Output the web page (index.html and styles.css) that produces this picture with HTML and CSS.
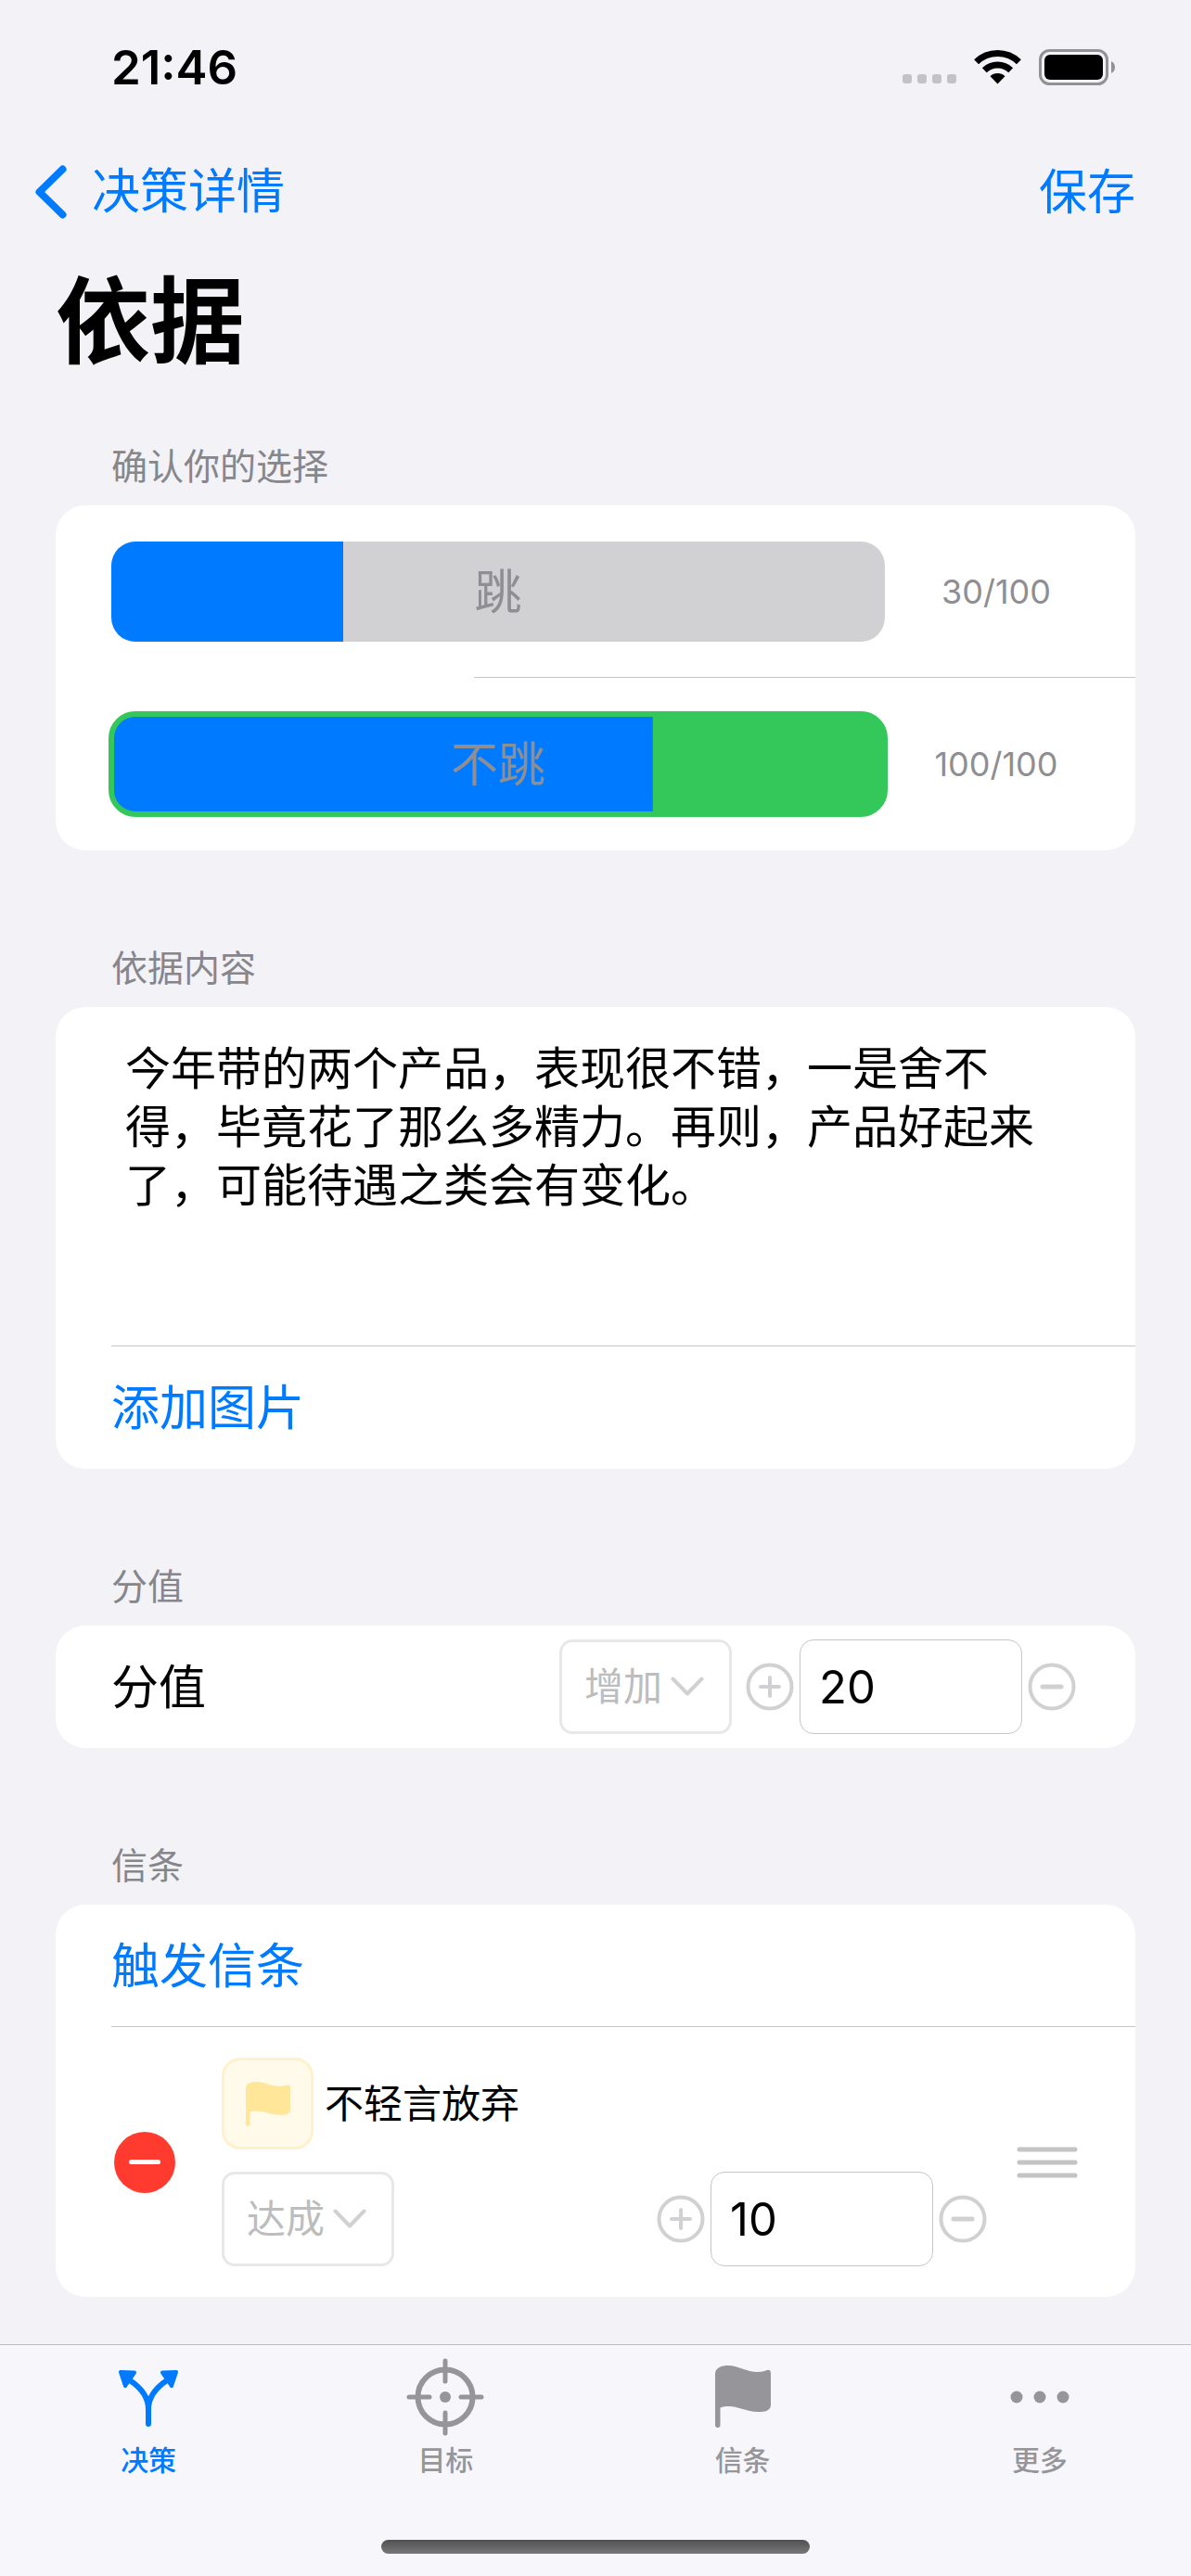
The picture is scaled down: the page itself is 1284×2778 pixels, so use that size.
FILE: index.html
```html
<!DOCTYPE html>
<html lang="zh-CN">
<head>
    <meta charset="UTF-8">
    <meta name="viewport" content="width=device-width, initial-scale=1">
    <title>依据</title>
    <link rel="stylesheet" href="styles.css">
</head>
<body>
    <!-- shared icons -->
    <svg class="sprite" width="0" height="0" aria-hidden="true">
        <symbol id="flag" viewBox="0 0 60 67" preserveAspectRatio="none">
            <path d="M0 9Q0 5 3 3C7 0 11 0 14 0C24 0 34 7 46 7C50 7 53 6 56 5Q60 4 60 9V43Q60 46 57 48C54 50 50 50 46 50C34 50 25 44 15 44C12 44 8 44 5.500 45.500V64Q5.500 67 2.700 67Q0 67 0 64Z"/>
        </symbol>
        <symbol id="down" viewBox="0 0 36 22">
            <path d="M2.500 2.500L18 18.500L33.500 2.500" fill="none" stroke="currentColor" stroke-width="4" stroke-linecap="round" stroke-linejoin="round"/>
        </symbol>
        <symbol id="plus" viewBox="0 0 52 52">
            <circle cx="26" cy="26" r="23.500" fill="none" stroke="currentColor" stroke-width="4"/>
            <path d="M16 26H36M26 16V36" stroke="currentColor" stroke-width="4" stroke-linecap="round"/>
        </symbol>
        <symbol id="minus" viewBox="0 0 52 52">
            <circle cx="26" cy="26" r="23.500" fill="none" stroke="currentColor" stroke-width="4"/>
            <path d="M16 26H36" stroke="currentColor" stroke-width="5" stroke-linecap="round"/>
        </symbol>
    </svg>

    <div class="status-bar">
        <span class="time">21:46</span>
        <div class="status-icons">
            <svg width="58" height="12" viewBox="0 0 58 12" fill="#c3c3c7">
                <rect width="10" height="10" rx="3"/>
                <rect x="16" width="10" height="10" rx="3"/>
                <rect x="32" width="10" height="10" rx="3"/>
                <rect x="48" width="10" height="10" rx="3"/>
            </svg>
            <svg class="wifi" width="51" height="38" viewBox="0 0 51 38" fill="none" stroke="#000" stroke-width="7">
                <path d="M2.600 12.800A33 33 0 0 1 48.400 12.800"/>
                <path d="M11.300 21.800A20.500 20.500 0 0 1 39.700 21.800"/>
                <path d="M17.500 28.200A11.500 11.500 0 0 1 33.500 28.200L25.500 36.500Z" fill="#000" stroke="none"/>
            </svg>
            <svg width="82" height="39" viewBox="0 0 82 39">
                <rect x="1.500" y="1.500" width="72" height="36" rx="10" fill="none" stroke="#929296" stroke-width="3"/>
                <rect x="6" y="6" width="63" height="27" rx="6"/>
                <path d="M78 13Q82 15 82 19.500Q82 24 78 26Z" fill="#929296"/>
            </svg>
        </div>
    </div>

    <nav class="nav-bar">
        <a href="#" class="back">
            <svg width="34" height="58" viewBox="0 0 34 58">
                <path d="M29.500 4.500L4.500 29L29.500 53.500" fill="none" stroke="currentColor" stroke-width="8" stroke-linecap="round" stroke-linejoin="round"/>
            </svg>
            决策详情
        </a>
        <button class="link" type="button">保存</button>
    </nav>

    <main>
        <h1>依据</h1>

        <section>
            <h2>确认你的选择</h2>
            <div class="card">
                <div class="row choice-row">
                    <button class="choice" type="button" style="background-size: 30% 100%">跳</button>
                    <span class="score">30/100</span>
                </div>
                <hr class="short">
                <div class="row choice-row">
                    <button class="choice selected" type="button" style="background-size: 70% 100%">不跳</button>
                    <span class="score">100/100</span>
                </div>
            </div>
        </section>

        <section>
            <h2><label for="content">依据内容</label></h2>
            <div class="card">
                <div class="row">
                    <textarea id="content">今年带的两个产品，表现很不错，一是舍不得，毕竟花了那么多精力。再则，产品好起来了，可能待遇之类会有变化。</textarea>
                </div>
                <hr>
                <div class="row">
                    <button class="link" type="button">添加图片</button>
                </div>
            </div>
        </section>

        <section>
            <h2>分值</h2>
            <div class="card">
                <div class="row">
                    <label class="row-label" for="score">分值</label>
                    <div class="select">
                        <select aria-label="分值类型">
                            <option>增加</option>
                            <option>减少</option>
                        </select>
                        <svg width="36" height="22"><use href="#down"/></svg>
                    </div>
                    <div class="stepper">
                        <button type="button" aria-label="加"><svg width="52" height="52"><use href="#plus"/></svg></button>
                        <input type="text" id="score" inputmode="numeric" value="20">
                        <button type="button" aria-label="减"><svg width="52" height="52"><use href="#minus"/></svg></button>
                    </div>
                </div>
            </div>
        </section>

        <section>
            <h2>信条</h2>
            <div class="card">
                <div class="row">
                    <button class="link" type="button">触发信条</button>
                </div>
                <hr>
                <div class="row creed-row">
                    <button class="delete" type="button" aria-label="删除"></button>
                    <div class="creed">
                        <div class="creed-title">
                            <span class="creed-icon">
                                <svg width="48" height="48" fill="#ffe699"><use href="#flag"/></svg>
                            </span>
                            <label for="creed-score">不轻言放弃</label>
                        </div>
                        <div class="creed-controls">
                            <div class="select">
                                <select aria-label="信条状态">
                                    <option>达成</option>
                                    <option>违背</option>
                                </select>
                                <svg width="36" height="22"><use href="#down"/></svg>
                            </div>
                            <div class="stepper">
                                <button type="button" aria-label="加"><svg width="52" height="52"><use href="#plus"/></svg></button>
                                <input type="text" id="creed-score" inputmode="numeric" value="10">
                                <button type="button" aria-label="减"><svg width="52" height="52"><use href="#minus"/></svg></button>
                            </div>
                        </div>
                    </div>
                    <svg class="grip" width="66" height="34" viewBox="0 0 66 34" stroke="#c4c4c6" stroke-width="5" stroke-linecap="round">
                        <path d="M3 3H63M3 17H63M3 31H63"/>
                    </svg>
                </div>
            </div>
        </section>
    </main>

    <footer class="tab-bar">
        <div class="tabs">
            <a href="#" class="tab active">
                <svg width="84" height="84" viewBox="0 0 84 84">
                    <path d="M22 24C34 32 42 42 42 55V71M62 24C50 32 42 42 42 55" fill="none" stroke="currentColor" stroke-width="6" stroke-linecap="round"/>
                    <path d="M12 15L27 15.500L17 30ZM72 15L57 15.500L67 30Z" fill="currentColor" stroke="currentColor" stroke-width="4" stroke-linejoin="round"/>
                </svg>
                决策
            </a>
            <a href="#" class="tab">
                <svg width="84" height="84" viewBox="0 0 84 84" fill="none" stroke="currentColor" stroke-width="6">
                    <circle cx="42" cy="42" r="29.500"/>
                    <path d="M42 3V25M42 59V81M3 42H25M59 42H81" stroke-width="5" stroke-linecap="round"/>
                    <circle cx="42" cy="42" r="6" fill="currentColor" stroke="none"/>
                </svg>
                目标
            </a>
            <a href="#" class="tab">
                <svg width="84" height="84" fill="currentColor"><use href="#flag" x="12" y="8" width="60" height="67"/></svg>
                信条
            </a>
            <a href="#" class="tab">
                <svg width="84" height="84" viewBox="0 0 84 84" fill="currentColor">
                    <circle cx="17" cy="42" r="6.500"/>
                    <circle cx="42" cy="42" r="6.500"/>
                    <circle cx="67" cy="42" r="6.500"/>
                </svg>
                更多
            </a>
        </div>
        <div class="home-indicator"></div>
    </footer>
</body>
</html>
```
FILE: styles.css
```css
* {
    box-sizing: border-box;
}
body {
    margin: 0;
    min-height: 100vh;
    display: flex;
    flex-direction: column;
    background: #f2f2f7;
    color: #000;
    font-family: Inter, "Noto Sans CJK SC", sans-serif;
    font-size: 51px;
    line-height: 72px;
}
button, input, select, textarea {
    font: inherit;
    color: inherit;
    margin: 0;
    padding: 0;
    border: none;
    background: none;
    outline: none;
}
button {
    cursor: pointer;
}
svg {
    display: block;
    flex: none;
}
.sprite {
    position: absolute;
}
.status-bar {
    height: 145px;
    padding: 0 82px 0 120px;
    display: flex;
    justify-content: space-between;
    align-items: center;
}
.time {
    font-weight: 600;
}
.status-icons {
    display: flex;
    align-items: flex-end;
    gap: 19px;
}
.nav-bar {
    height: 124px;
    padding: 0 60px 0 38px;
    display: flex;
    justify-content: space-between;
    align-items: center;
}
.back {
    display: flex;
    align-items: center;
    gap: 27px;
    font-size: 52px;
    color: #007aff;
    text-decoration: none;
}
.link {
    padding-top: 2px;
    font-size: 52px;
    color: #007aff;
}
main {
    padding: 0 60px 50px;
}
h1 {
    margin: 6px 0 57px;
    font-size: 102px;
    line-height: 144px;
    font-weight: 700;
}
section + section {
    margin-top: 100px;
}
h2 {
    margin: 0 60px 15px;
    color: #86868b;
    font-size: 39px;
    line-height: 54px;
    font-weight: 400;
}
.card {
    background: #fff;
    border-radius: 32px;
}
.row {
    min-height: 132px;
    padding: 0 60px;
    display: flex;
    align-items: center;
}
hr {
    height: 1px;
    margin: -1px 0 0 60px;
    border: none;
    background: #c6c6c8;
}
hr.short {
    margin-left: 451px;
}

/* choices */
.choice-row {
    min-height: 186px;
    gap: 30px;
}
.choice {
    flex: 1;
    height: 108px;
    padding-top: 2px;
    border-radius: 26px;
    color: #8e8e93;
    background: #d1d1d3 linear-gradient(#007aff, #007aff) no-repeat;
}
.choice.selected {
    background-color: #34c759;
    outline: 6px solid #34c759;
    outline-offset: -3px;
}
.score {
    width: 180px;
    text-align: center;
    font-size: 36px;
    color: #8e8e93;
}

textarea {
    width: 100%;
    height: 298px;
    margin: 35px 0 33px;
    padding: 0 15px;
    font-size: 49px;
    line-height: 63px;
    resize: none;
    overflow: hidden;
}

/* select and stepper */
.row-label {
    margin-right: auto;
    padding-top: 2px;
}
.select {
    position: relative;
    width: 186px;
    color: #d1d1d3;
}
.select select {
    width: 100%;
    height: 102px;
    padding-left: 24px;
    border: 3px solid #e8e8e8;
    border-radius: 14px;
    appearance: none;
    font-size: 42px;
    color: #bdbdbd;
}
.select svg {
    position: absolute;
    right: 30px;
    top: 40px;
    pointer-events: none;
}
.stepper {
    display: flex;
    align-items: center;
    gap: 2px;
    margin-left: 11px;
}
.stepper button {
    width: 60px;
    height: 60px;
    display: flex;
    align-items: center;
    justify-content: center;
    color: #d1d1d3;
}
.stepper input {
    width: 240px;
    height: 102px;
    padding: 0 20px;
    border: 1px solid #c6c6c8;
    border-radius: 15px;
    font-size: 49px;
}

/* creed */
.creed-row {
    min-height: 291px;
    padding-right: 62px;
}
.delete {
    width: 66px;
    height: 66px;
    margin-left: 3px;
    display: flex;
    align-items: center;
    justify-content: center;
    border-radius: 50%;
    background: #ff3b30;
}
.delete::before {
    content: "";
    width: 34px;
    height: 5px;
    border-radius: 3px;
    background: #fff;
}
.creed {
    flex: 1;
    margin: 0 28px 0 50px;
    display: flex;
    flex-direction: column;
    gap: 24px;
}
.creed-title {
    display: flex;
    align-items: center;
    gap: 12px;
    font-size: 42px;
}
.creed-icon {
    width: 99px;
    height: 99px;
    display: flex;
    align-items: center;
    justify-content: center;
    border: 3px solid #fff1cc;
    border-radius: 20px;
    background: #fffaea;
}
.creed-controls {
    display: flex;
    justify-content: space-between;
}

/* tab bar */
.tab-bar {
    margin-top: auto;
    padding: 14px 0 24px;
    border-top: 1px solid #bcbcc3;
    background: #f7f7fb;
}
.tabs {
    display: grid;
    grid-template-columns: repeat(4, 1fr);
    margin-right: 3px;
}
.tab {
    display: flex;
    flex-direction: column;
    align-items: center;
    gap: 8px;
    color: #96959a;
    font-size: 30px;
    line-height: 36px;
    font-weight: 500;
    text-decoration: none;
}
.tab.active {
    color: #007aff;
}
.home-indicator {
    width: 36%;
    height: 15px;
    margin: 68px auto 0;
    border-radius: 8px;
    background: linear-gradient(#4f504f, #787878);
}
```
